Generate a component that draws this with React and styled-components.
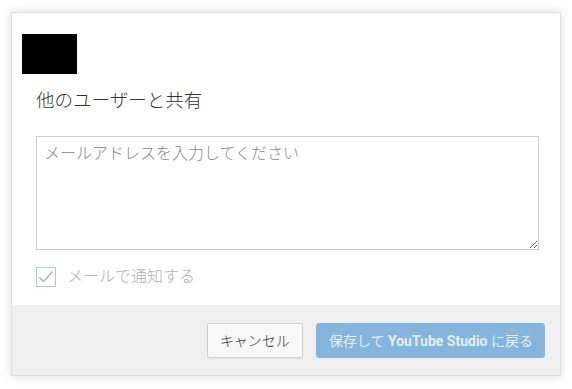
import React from 'react'
import styled, { createGlobalStyle } from 'styled-components'

const GlobalStyle = createGlobalStyle`
  html, body {
    margin: 0;
    padding: 0;
    background: #fff;
  }
  body {
    font-family: Roboto, "Noto Sans CJK JP", sans-serif;
  }
`

const Page = styled.div`
  padding: 12px 11px 13px 11px;
`

const Dialog = styled.div`
  width: 550px;
  height: 364px;
  box-sizing: border-box;
  background: #fff;
  border: 1px solid #dedede;
  box-shadow: 0 0 10px rgba(0, 0, 0, 0.14);
  display: flex;
  flex-direction: column;
`

const Logo = styled.div`
  width: 55px;
  height: 40px;
  background: #000;
  margin: 21px 0 0 10px;
`

const Body = styled.div`
  padding: 0 21px 0 24px;
  display: flex;
  flex-direction: column;
`

const Title = styled.h2`
  margin: 15px 0 0 0;
  font-size: 18.5px;
  line-height: 24px;
  font-weight: 300;
  color: #333;
`

const EmailBox = styled.textarea`
  margin-top: 23px;
  width: 503px;
  height: 114px;
  box-sizing: border-box;
  border: 1px solid #cfcfcf;
  padding: 7px;
  font-family: Roboto, "Noto Sans CJK JP", sans-serif;
  font-size: 16px;
  font-weight: 300;
  line-height: 20px;
  resize: vertical;
  outline: none;
  &::placeholder {
    color: #888;
  }
`

const CheckRow = styled.label`
  margin-top: 17px;
  display: flex;
  align-items: center;
  gap: 11px;
  height: 20px;
`

const CheckBox = styled.span`
  width: 20px;
  height: 20px;
  box-sizing: border-box;
  border: 1px solid #b6c6da;
  background: #fff;
  display: flex;
  align-items: center;
  justify-content: center;
`

const CheckLabel = styled.span`
  font-size: 16px;
  font-weight: 300;
  color: #b0b0b0;
  line-height: 20px;
`

const Footer = styled.div`
  margin-top: auto;
  height: 70px;
  background: #efefef;
  display: flex;
  align-items: center;
  justify-content: flex-end;
  gap: 13px;
  padding: 0 15px 0 0;
`

const Button = styled.button`
  height: 35px;
  box-sizing: border-box;
  padding: 0 ${p => (p.primary ? '11px 0 12px' : '12px')};
  border-radius: ${p => (p.primary ? '3px' : '2px')};
  border: 1px solid ${p => (p.primary ? '#85b5dc' : '#d0d0d0')};
  background: ${p => (p.primary ? '#85b5dc' : '#f8f8f8')};
  color: ${p => (p.primary ? 'rgba(255,255,255,0.8)' : '#333')};
  font-family: Roboto, "Noto Sans CJK JP", sans-serif;
  font-size: 14px;
  font-weight: ${p => (p.primary ? 400 : 300)};
  white-space: nowrap;
  box-shadow: ${p => (p.primary ? 'none' : '0 1px 0 rgba(0,0,0,0.05)')};
  b {
    font-weight: 700;
  }
`

const Check = () => (
  <svg width="16" height="14" viewBox="0 0 16 14">
    <path d="M1.5 7.5 L5.5 11.5 L14.5 1.5" fill="none" stroke="#b3b3b3" strokeWidth="1.5" />
  </svg>
)

export default function App() {
  return (
    <>
      <GlobalStyle />
      <Page>
        <Dialog>
          <Logo />
          <Body>
            <Title>他のユーザーと共有</Title>
            <EmailBox placeholder="メールアドレスを入力してください" />
            <CheckRow>
              <CheckBox>
                <Check />
              </CheckBox>
              <CheckLabel>メールで通知する</CheckLabel>
            </CheckRow>
          </Body>
          <Footer>
            <Button>キャンセル</Button>
            <Button primary>
              保存して <b>YouTube Studio</b> に戻る
            </Button>
          </Footer>
        </Dialog>
      </Page>
    </>
  )
}
